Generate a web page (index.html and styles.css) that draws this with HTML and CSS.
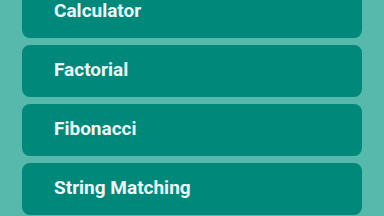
FILE: index.html
```html
<!DOCTYPE html>
<html lang="en">
<head>
    <meta charset="UTF-8">
    <title>Algorithms</title>
    <link rel="stylesheet" href="styles.css">
</head>
<body>

<div class="menuList">
    <div class="menuItem">
        <a>Calculator</a>
    </div>
    <div class="menuItem">
        <a>Factorial</a>
    </div>
    <div class="menuItem">
        <a>Fibonacci</a>
    </div>
    <div class="menuItem">
        <a>String Matching</a>
    </div>
</div>

</body>
</html>
```

FILE: styles.css
```css
body {
    margin: 0;
    background-color: #56b9ab;
    font-family: Roboto, "Liberation Sans", sans-serif;
    overflow: hidden;
}

/*列表向上滚动了一点*/
.menuList {
    display: flex;
    flex-direction: column;
    gap: 7px;
    margin-top: -14px;
    padding: 0 22px;
}

.menuItem {
    box-sizing: border-box;
    height: 52px;
    padding: 0 0 3px 32px;
    line-height: 49px;
    border-radius: 8px;
    background-color: #00897b;
}

.menuItem a {
    color: #eef8f6;
    font-size: 19px;
    font-weight: bold;
}
```
